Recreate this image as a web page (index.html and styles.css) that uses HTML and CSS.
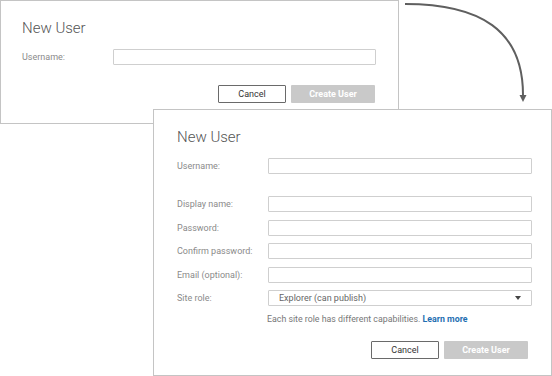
FILE: index.html
```html
<!DOCTYPE html>
<html lang="en">
<head>
    <meta charset="UTF-8">
    <title>New User</title>
    <link rel="stylesheet" href="styles.css">
</head>
<body>
    <div class="stage">
        <div class="dialog dialog-small">
            <h2 class="dialog-title">New User</h2>
            <div class="form">
                <label class="field-label" for="u1">Username:</label>
                <input class="field" id="u1" type="text">
            </div>
            <div class="actions">
                <button class="btn btn-cancel">Cancel</button>
                <button class="btn btn-create" disabled>Create User</button>
            </div>
        </div>

        <svg class="flow-arrow" width="552" height="110" viewBox="0 0 552 110">
            <path d="M405 4 C480 4 523 30 523 95" fill="none" stroke="#5f5f5f" stroke-width="2"/>
            <path d="M519.5 95 L526.5 95 L523 102 Z" fill="#5f5f5f"/>
        </svg>

        <div class="dialog dialog-large">
            <h2 class="dialog-title">New User</h2>
            <div class="form">
                <label class="field-label" for="u2">Username:</label>
                <input class="field" id="u2" type="text">
            </div>
            <div class="form form-details">
                <label class="field-label" for="dn">Display name:</label>
                <input class="field" id="dn" type="text">
                <label class="field-label" for="pw">Password:</label>
                <input class="field" id="pw" type="password">
                <label class="field-label" for="cpw">Confirm password:</label>
                <input class="field" id="cpw" type="password">
                <label class="field-label" for="em">Email (optional):</label>
                <input class="field" id="em" type="text">
                <span class="field-label">Site role:</span>
                <div class="field select">
                    <span>Explorer (can publish)</span>
                    <span class="caret"></span>
                </div>
            </div>
            <p class="hint">Each site role has different capabilities. <a href="#">Learn more</a></p>
            <div class="actions actions-large">
                <button class="btn btn-cancel">Cancel</button>
                <button class="btn btn-create" disabled>Create User</button>
            </div>
        </div>
    </div>
</body>
</html>
```

FILE: styles.css
```css
body {
    margin: 0;
    background: #fff;
    font-family: Roboto, "Liberation Sans", sans-serif;
}
.stage {
    position: relative;
    width: 552px;
    height: 376px;
    overflow: hidden;
}
.dialog {
    position: absolute;
    box-sizing: border-box;
    width: 399px;
    padding: 18px 21px 0 23px;
    border: 1px solid #c4c4c4;
    background: #fff;
}
.dialog-small {
    left: 0;
    top: 0;
    height: 124px;
    padding-left: 21px;
}
.dialog-large {
    left: 153px;
    top: 109px;
    height: 267px;
}
.flow-arrow {
    position: absolute;
    left: 0;
    top: 0;
}
.dialog-title {
    margin: 0;
    font-size: 15px;
    line-height: 18px;
    font-weight: 300;
    color: #555;
}
.form {
    display: grid;
    grid-template-columns: 91px 264px;
    row-gap: 7.5px;
    align-items: center;
    margin-top: 12px;
}
.dialog-small .form {
    grid-template-columns: 91px 263px;
}
.form-details {
    margin-top: 22px;
}
.field-label {
    font-size: 9px;
    color: #8a8a8a;
}
.field {
    box-sizing: border-box;
    height: 16px;
    margin: 0;
    padding: 0 6px;
    border: 1px solid #cfcfcf;
    border-radius: 1px;
    font: inherit;
    font-size: 9px;
    outline: none;
}
.select {
    display: flex;
    align-items: center;
    justify-content: space-between;
    padding: 0 10px 0 10px;
    color: #666;
}
.caret {
    width: 0;
    height: 0;
    border-left: 3px solid transparent;
    border-right: 3px solid transparent;
    border-top: 4px solid #444;
}
.hint {
    margin: 6px 0 0 90px;
    font-size: 8.8px;
    line-height: 14px;
    color: #777;
}
.hint a {
    color: #1f6fb2;
    font-weight: 700;
    text-decoration: none;
}
.actions {
    display: flex;
    justify-content: flex-end;
    gap: 5px;
    margin: 20px 2px 0 0;
}
.actions-large {
    margin-top: 15px;
}
.btn {
    box-sizing: border-box;
    height: 18px;
    padding: 0;
    font: inherit;
    font-size: 9px;
    border-radius: 1px;
    cursor: pointer;
}
.btn-cancel {
    width: 68px;
    border: 1px solid #6a6a6a;
    background: #fff;
    color: #333;
}
.btn-create {
    width: 84px;
    border: none;
    background: #c9c9c9;
    color: #fff;
    font-weight: 700;
}
```
